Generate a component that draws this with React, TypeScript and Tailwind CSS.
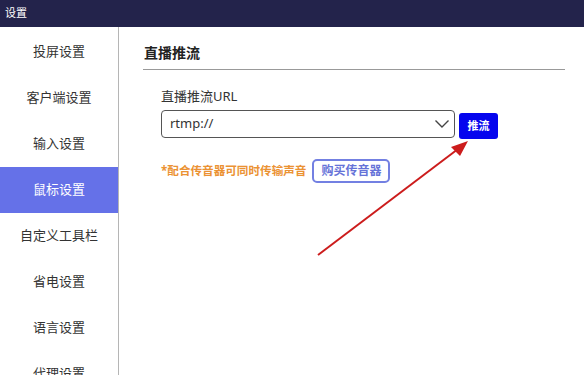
import React from "react";

const items = ["投屏设置", "客户端设置", "输入设置", "鼠标设置", "自定义工具栏", "省电设置", "语言设置", "代理设置"];

export default function App() {
  return (
    <div
      className="relative w-[584px] h-[375px] overflow-hidden bg-white"
      style={{ fontFamily: '"Noto Sans", "Noto Sans CJK SC", sans-serif' }}
    >
      <div className="h-[27px] bg-[#23234b] flex items-center pl-[5px] text-[11px] text-white">设置</div>
      <div className="flex h-[348px]">
        <div className="w-[119px] shrink-0 border-r border-[#b5b5b5] pt-[2px] flex flex-col">
          {items.map((t, i) => (
            <div
              key={t}
              className={
                "h-[46px] shrink-0 flex items-center justify-center text-[13px] " +
                (i === 3 ? "bg-[#6571e8] text-white" : "text-[#333]")
              }
            >
              {t}
            </div>
          ))}
        </div>
        <div className="flex-1 pl-[24px] pr-[19px] pt-[15px]">
          <div className="pl-[1px] h-[20px] flex items-center text-[14px] font-bold text-[#222]">直播推流</div>
          <div className="mt-[7px] h-px bg-[#999]" />
          <div className="pl-[18px]">
            <div className="mt-[17px] h-[20px] flex items-center text-[13px] text-[#333]">直播推流URL</div>
            <div className="mt-[3px] flex items-start">
              <div className="w-[294px] h-[28px] border border-[#555] rounded-[4px] flex items-center justify-between pl-[8px] pr-[4px]">
                <span className="text-[13px] text-[#333]">rtmp://</span>
                <svg width="16" height="10" viewBox="0 0 16 10" fill="none">
                  <path d="M1.5 1.5 L8 8 L14.5 1.5" stroke="#444" strokeWidth="1.4" />
                </svg>
              </div>
              <div className="ml-[4px] mt-[3px] w-[39px] h-[26px] rounded-[3px] bg-[#0505ee] flex items-center justify-center text-[11px] font-bold text-white">
                推流
              </div>
            </div>
            <div className="mt-[20px] flex items-center">
              <span className="text-[11.6px] font-bold text-[#eb9233]">*配合传音器可同时传输声音</span>
              <div className="ml-[6px] w-[78px] h-[24px] border-2 border-[#7380e2] rounded-[5px] flex items-center justify-center text-[12px] font-bold text-[#6673d8]">
                购买传音器
              </div>
            </div>
          </div>
        </div>
      </div>
      <svg className="absolute left-0 top-0" width="584" height="375" viewBox="0 0 584 375">
        <line x1="318" y1="255" x2="458" y2="149" stroke="#cc1c1c" strokeWidth="2" />
        <polygon points="468,141 451,147 460,156" fill="#cc1c1c" />
      </svg>
    </div>
  );
}
